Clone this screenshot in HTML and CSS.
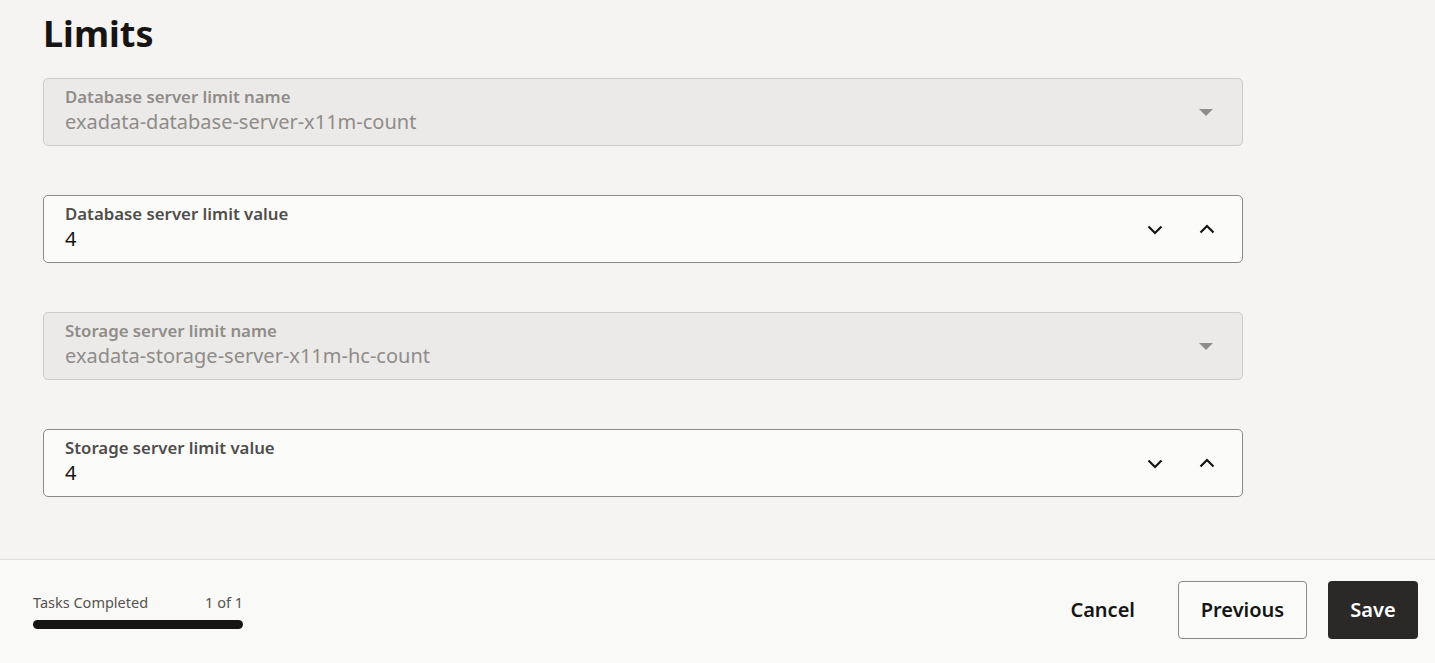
FILE: index.html
```html
<!DOCTYPE html>
<html lang="en">
<head>
<meta charset="utf-8">
<title>Limits</title>
<link rel="stylesheet" href="styles.css">
</head>
<body>
<div class="page">
  <main class="content">
    <h1 class="title">Limits</h1>
    <div class="fields">
      <div class="field disabled">
        <div class="field-text">
          <div class="label">Database server limit name</div>
          <div class="value">exadata-database-server-x11m-count</div>
        </div>
        <span class="caret"></span>
      </div>
      <div class="field">
        <div class="field-text">
          <div class="label">Database server limit value</div>
          <div class="value">4</div>
        </div>
        <div class="steppers">
          <svg class="chev" viewBox="0 0 18 18" width="18" height="18"><path d="M2.5 6.5l6.5 6.5 6.5-6.5" fill="none" stroke="#161513" stroke-width="2.2"/></svg>
          <svg class="chev" viewBox="0 0 18 18" width="18" height="18"><path d="M2.5 12.5l6.5-6.5 6.5 6.5" fill="none" stroke="#161513" stroke-width="2.2"/></svg>
        </div>
      </div>
      <div class="field disabled">
        <div class="field-text">
          <div class="label">Storage server limit name</div>
          <div class="value">exadata-storage-server-x11m-hc-count</div>
        </div>
        <span class="caret"></span>
      </div>
      <div class="field">
        <div class="field-text">
          <div class="label">Storage server limit value</div>
          <div class="value">4</div>
        </div>
        <div class="steppers">
          <svg class="chev" viewBox="0 0 18 18" width="18" height="18"><path d="M2.5 6.5l6.5 6.5 6.5-6.5" fill="none" stroke="#161513" stroke-width="2.2"/></svg>
          <svg class="chev" viewBox="0 0 18 18" width="18" height="18"><path d="M2.5 12.5l6.5-6.5 6.5 6.5" fill="none" stroke="#161513" stroke-width="2.2"/></svg>
        </div>
      </div>
    </div>
  </main>
  <footer class="footer">
    <div class="progress">
      <div class="progress-text"><span>Tasks Completed</span><span>1 of 1</span></div>
      <div class="bar"></div>
    </div>
    <div class="actions">
      <button class="btn btn-text">Cancel</button>
      <button class="btn btn-outline">Previous</button>
      <button class="btn btn-primary">Save</button>
    </div>
  </footer>
</div>
</body>
</html>
```
FILE: styles.css
```css
* { box-sizing: border-box; }
html, body { margin: 0; padding: 0; }
body {
  font-family: "Noto Sans", "Open Sans", sans-serif;
  color: #161513;
  background: #f5f4f2;
  overflow: hidden;
}
.page {
  height: 663px;
  display: flex;
  flex-direction: column;
}
.content {
  height: 559px;
  padding: 0 192px 0 43px;
}
.title {
  margin: 0;
  padding-top: 8px;
  font-size: 36px;
  line-height: 52px;
  font-weight: 700;
  color: #161513;
}
.fields {
  margin-top: 18px;
  display: flex;
  flex-direction: column;
  gap: 49px;
}
.field {
  height: 68px;
  border: 1px solid #8c8a87;
  border-radius: 5px;
  background: #fbfbfa;
  display: flex;
  align-items: center;
  padding: 0 22px 0 21px;
}
.field.disabled {
  background: #ebeae8;
  border-color: #cdcbc8;
}
.field-text { flex: 1; }
.label {
  font-size: 16.8px;
  line-height: 22px;
  font-weight: 600;
  color: #4f4d4b;
  margin-top: -3px;
}
.value {
  font-size: 20px;
  line-height: 27px;
  color: #161513;
}
.disabled .label { color: #8f8c89; }
.disabled .value { color: #8f8c89; }
.caret {
  width: 0;
  height: 0;
  border-left: 7px solid transparent;
  border-right: 7px solid transparent;
  border-top: 7px solid #8f8c89;
  margin-right: 7px;
}
.steppers {
  display: flex;
  gap: 34px;
  align-items: center;
  margin-right: 4px;
}
.chev { display: block; }
.footer {
  height: 104px;
  border-top: 1px solid #e2e0dd;
  background: #f9f9f8;
  display: flex;
  align-items: center;
  justify-content: space-between;
  padding: 0 17px 0 33px;
}
.progress { width: 210px; margin-top: -3px; }
.progress-text {
  display: flex;
  justify-content: space-between;
  font-size: 14.5px;
  line-height: 20px;
  color: #55524f;
}
.bar {
  margin-top: 8px;
  height: 9px;
  border-radius: 5px;
  background: #161513;
}
.actions {
  display: flex;
  align-items: center;
  gap: 21px;
  margin-top: -4px;
}
.btn {
  font-family: "Noto Sans", "Open Sans", sans-serif;
  font-size: 20px;
  font-weight: 600;
  height: 58px;
  border-radius: 4px;
  cursor: pointer;
}
.btn-text {
  background: transparent;
  border: none;
  color: #161513;
  padding: 0 22px;
}
.btn-outline {
  background: #fbfbfa;
  border: 1px solid #8c8a87;
  color: #161513;
  width: 129px;
}
.btn-primary {
  background: #2b2927;
  border: none;
  color: #ffffff;
  width: 90px;
}
```
